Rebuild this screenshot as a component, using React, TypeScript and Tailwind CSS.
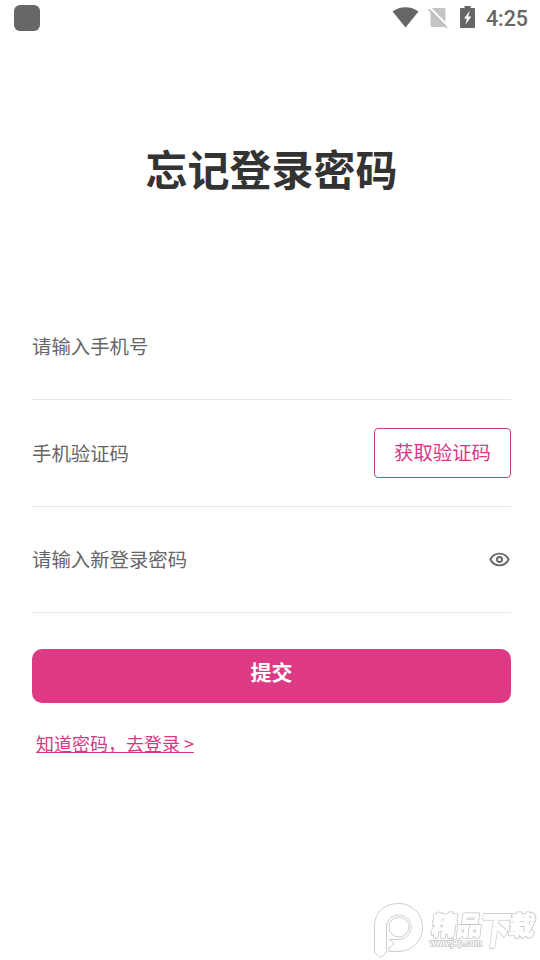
import React, { useState } from 'react';

function StatusBar() {
    return (
        <div className="flex h-9 items-center justify-between pl-3.5 pr-3 text-[#666666]">
            <div className="h-[26px] w-[26px] rounded-[6px] bg-[#676767]" />
            <div className="flex items-center">
                {/* Wifi */}
                <svg className="mr-[9px] h-[22px] w-[27px]" viewBox="0 0 27 22" fill="currentColor">
                    <path d="M0.5 4.6 C8 -1.3 19 -1.3 26.5 4.6 L13.5 20.6 Z" />
                </svg>
                {/* No sim */}
                <svg className="mr-3 h-[22px] w-5" viewBox="0 0 20 22">
                    <path d="M4 1 H16 Q17.5 1 17.5 2.5 V18 Q17.5 20 16 20 H4 Q2.5 20 2.5 18 V2.5 Q2.5 1 4 1 Z" fill="#c4c4c4" />
                    <path d="M0 0 H5 L2.5 5 H0 Z" fill="#ffffff" />
                    <path d="M1.7 0.7 L21 20" stroke="#ffffff" strokeWidth="2.2" />
                    <path d="M0.4 2 L19 20.6" stroke="#bcbcbc" strokeWidth="1.5" />
                </svg>
                {/* Battery */}
                <svg className="mb-0.5 mr-[11px] h-[22px] w-[15px]" viewBox="0 0 15 22">
                    <path d="M4.5 0 H10.5 V2 H14 Q15 2 15 3 V21 Q15 22 14 22 H1 Q0 22 0 21 V3 Q0 2 1 2 H4.5 Z" fill="#666666" />
                    <path d="M9.8 4.7 L4 12.4 H6.8 L5.4 18.8 L11.3 10.4 H8.3 Z" fill="#ffffff" />
                </svg>
                <span className="pt-0.5 font-[Roboto,sans-serif] text-[21.4px] font-medium leading-9">4:25</span>
            </div>
        </div>
    );
}

function Field({ label, children }: { label: string; children?: React.ReactNode }) {
    return (
        <div className="flex h-[106.5px] items-center justify-between border-b border-[#e8e8e8]">
            <span className="text-[19.4px] leading-7 text-[#666666]">{label}</span>
            {children}
        </div>
    );
}

function Watermark() {
    return (
        <svg className="pointer-events-none fixed bottom-0 right-0 h-[70px] w-[180px]" viewBox="0 0 180 70">
            <g fill="#ffffff" stroke="#cdcdcd" strokeWidth="1" strokeLinejoin="round">
                <path d="M14.5 62.5 V36 C14.5 22 25 13.5 38.5 13.5 C52 13.5 62.5 24 62.5 37.5 C62.5 51 52 61.5 38 61.5 H29 V58 L34 53.8 L29 49.5 H38 C46 49 51 44 51 37 C51 30 45.5 25 39 25 C32 25 26.5 30 26.5 37 V62.5 L20.5 67.5 Z" />
                <circle cx="39" cy="37" r="10" />
            </g>
            {/* Grey edge first, then the white body on top of it */}
            <g fill="#ffffff" stroke="#c4c4c4" strokeWidth="2.8" strokeLinejoin="round">
                <g id="letters" transform="translate(71 0) skewX(-8)" className="font-['Noto_Sans_CJK_SC',sans-serif] font-bold">
                    <text x="6" y="45" fontSize="26" textLength="50" lengthAdjust="spacingAndGlyphs">精品</text>
                    <text transform="translate(55 54) scale(0.78 1)" fontSize="38">下</text>
                    <text x="83" y="45" fontSize="26" textLength="26" lengthAdjust="spacingAndGlyphs">载</text>
                </g>
            </g>
            <use href="#letters" fill="#ffffff" stroke="#ffffff" strokeWidth="1.2" strokeLinejoin="round" />
            <text
                x="70"
                y="56"
                fontSize="8.5"
                textLength="52"
                lengthAdjust="spacingAndGlyphs"
                className="font-['Liberation_Sans',sans-serif] font-bold"
                fill="#ffffff"
                stroke="#c4c4c4"
                strokeWidth="1.6"
                paintOrder="stroke"
            >
                www.j9p.com
            </text>
        </svg>
    );
}

export default function App() {
    const [showPassword, setShowPassword] = useState(false);

    return (
        <div className="h-screen overflow-hidden bg-white font-['Noto_Sans_CJK_SC',sans-serif]">
            <StatusBar />

            <h1 className="mt-[101px] pl-[3px] text-center text-[42px] font-bold leading-[62px] text-[#333333]">忘记登录密码</h1>

            <form className="mt-[94.5px] pl-8 pr-[29px]" onSubmit={(e) => e.preventDefault()}>
                <Field label="请输入手机号" />
                <Field label="手机验证码">
                    <button type="button" className="h-[50px] w-[137px] rounded-[4px] border border-[#c04387] pb-0.5 text-[19.4px] text-[#d43a84]">
                        获取验证码
                    </button>
                </Field>
                <Field label="请输入新登录密码">
                    <button type="button" className="mr-[1.5px]" onClick={() => setShowPassword(!showPassword)}>
                        <svg className="h-[15px] w-[21px]" viewBox="0 0 22 16" fill="none" stroke="#666666" strokeWidth="2">
                            <path d="M1.3 8 C5.5 -0.3 16.5 -0.3 20.7 8 C16.5 16.3 5.5 16.3 1.3 8 Z" strokeLinejoin="round" />
                            <circle cx="11" cy="8" r="2.7" />
                        </svg>
                    </button>
                </Field>

                <button type="submit" className="mt-9 flex h-[54px] w-full justify-center rounded-[10px] bg-[#de3984] pt-1.5 text-[21px] font-bold leading-8 text-white">
                    提交
                </button>
                <a href="#" className="ml-1 mt-[26px] inline-block text-[18px] leading-7 text-[#d43a84] underline underline-offset-1 [text-decoration-skip-ink:none]">
                    知道密码，去登录 &gt;
                </a>
            </form>

            <Watermark />
        </div>
    );
}
